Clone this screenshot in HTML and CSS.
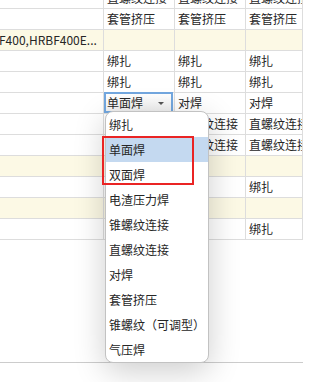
FILE: index.html
```html
<!DOCTYPE html>
<html lang="zh-CN">
<head>
<meta charset="utf-8">
<title>钢筋连接方式</title>
<link rel="stylesheet" href="styles.css">
</head>
<body>
<div class="screen">
  <div class="sheet">
    <div class="row"><div class="c"></div><div class="c">直螺纹连接</div><div class="c">直螺纹连接</div><div class="c">直螺纹连接</div></div>
    <div class="row"><div class="c"></div><div class="c">套管挤压</div><div class="c">套管挤压</div><div class="c">套管挤压</div></div>
    <div class="row y"><div class="c c1">F400,HRBF400E...</div><div class="c"></div><div class="c"></div><div class="c"></div></div>
    <div class="row"><div class="c"></div><div class="c">绑扎</div><div class="c">绑扎</div><div class="c">绑扎</div></div>
    <div class="row"><div class="c"></div><div class="c">绑扎</div><div class="c">绑扎</div><div class="c">绑扎</div></div>
    <div class="row"><div class="c"></div><div class="c edit"><span>单面焊</span><span class="caret"></span></div><div class="c">对焊</div><div class="c">对焊</div></div>
    <div class="row"><div class="c"></div><div class="c">直螺纹连接</div><div class="c">直螺纹连接</div><div class="c">直螺纹连接</div></div>
    <div class="row"><div class="c"></div><div class="c">直螺纹连接</div><div class="c">直螺纹连接</div><div class="c">直螺纹连接</div></div>
    <div class="row y"><div class="c"></div><div class="c"></div><div class="c"></div><div class="c"></div></div>
    <div class="row"><div class="c"></div><div class="c">绑扎</div><div class="c">绑扎</div><div class="c">绑扎</div></div>
    <div class="row y"><div class="c"></div><div class="c"></div><div class="c"></div><div class="c"></div></div>
    <div class="row"><div class="c"></div><div class="c">绑扎</div><div class="c">绑扎</div><div class="c">绑扎</div></div>
  </div>

  <ul class="dropdown">
    <li>绑扎</li>
    <li class="active">单面焊</li>
    <li>双面焊</li>
    <li>电渣压力焊</li>
    <li>锥螺纹连接</li>
    <li>直螺纹连接</li>
    <li>对焊</li>
    <li>套管挤压</li>
    <li>锥螺纹（可调型）</li>
    <li>气压焊</li>
  </ul>

  <div class="mark"></div>
</div>
</body>
</html>
```

FILE: styles.css
```css
* { box-sizing: border-box; }

html, body {
  margin: 0;
  padding: 0;
  background: #ffffff;
}

body {
  width: 303px;
  height: 382px;
  overflow: hidden;
  font-family: "Noto Sans CJK SC", "Noto Sans", sans-serif;
  font-size: 12px;
  color: #262626;
}

.screen {
  position: relative;
  width: 303px;
  height: 382px;
  overflow: hidden;
}

.sheet {
  margin-top: -12px;
  height: 375px;
  border-bottom: 1px solid #cccccc;
}

.row {
  display: grid;
  grid-template-columns: 104px 71px 71px 1fr;
  height: 21px;
  border-bottom: 1px solid #dddddd;
}

.row.y { background: #fcf9e5; }

.c {
  border-right: 1px solid #dddddd;
  padding-left: 3px;
  line-height: 20px;
  white-space: nowrap;
  overflow: hidden;
}

.c1 {
  padding-left: 0;
  text-indent: -1px;
}

.edit {
  position: relative;
  overflow: visible;
  display: flex;
  align-items: center;
  justify-content: space-between;
  padding-right: 10px;
  background: linear-gradient(#ffffff, #f0f0f0);
}

.edit::before {
  content: "";
  position: absolute;
  top: -1px;
  right: 1px;
  bottom: 0;
  left: 0;
  border: 2px solid #72a7df;
}

.caret {
  width: 0;
  height: 0;
  border-left: 3px solid transparent;
  border-right: 3px solid transparent;
  border-top: 3px solid #555555;
}

.dropdown {
  position: absolute;
  left: 105px;
  top: 111px;
  width: 104px;
  height: 252px;
  margin: 0;
  padding: 0;
  list-style: none;
  background: #ffffff;
  border: 1px solid #c2c2c2;
  border-radius: 8px;
  overflow: hidden;
  box-shadow: 0 8px 32px rgba(0, 0, 0, 0.2);
}

.dropdown li {
  height: 25px;
  line-height: 25px;
  padding-left: 3px;
  white-space: nowrap;
}

.dropdown li.active { background: #c4d9f0; }

.mark {
  position: absolute;
  left: 102px;
  top: 136px;
  width: 92px;
  height: 49px;
  border: 2px solid #ea2424;
}
```
